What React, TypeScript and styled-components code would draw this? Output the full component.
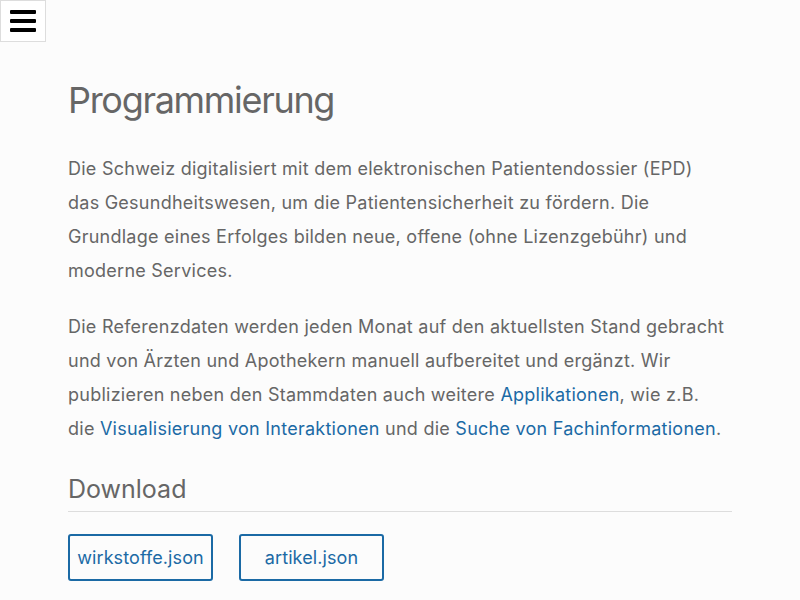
import styled, { createGlobalStyle } from 'styled-components'

const GlobalStyle = createGlobalStyle`
    body {
        margin: 0;
        background: #fcfcfc;
        font-family: Inter, "Liberation Sans", sans-serif;
        color: #666;
    }
`;

const MenuButton = styled.button`
    position: absolute;
    top: 0;
    left: 0;
    width: 46px;
    height: 42px;
    padding: 0;
    background: #fff;
    border: 1px solid #ddd;
    display: flex;
    flex-direction: column;
    align-items: center;
    justify-content: center;
    gap: 5px;
    cursor: pointer;
`;

const Bar = styled.span`
    display: block;
    width: 26px;
    height: 4px;
    border-radius: 1px;
    background: #000;
`;

const Container = styled.main`
    max-width: 664px;
    margin: 0 auto;
    padding-top: 79px;
`;

const Title = styled.h1`
    margin: 0 0 30px;
    font-size: 36px;
    font-weight: 400;
    letter-spacing: -1.3px;
    line-height: 1.2;
`;

const Text = styled.p`
    max-width: 660px;
    margin: 0 0 22px;
    font-size: 18px;
    letter-spacing: 0.25px;
    line-height: 34px;
`;

const TextLink = styled.a`
    color: #1b6aa5;
    text-decoration: none;
`;

const SectionTitle = styled.h2`
    margin: 27px 0 22px;
    padding-bottom: 5px;
    border-bottom: 1px solid #ddd;
    font-size: 25px;
    font-weight: 400;
    line-height: 1.3;
`;

const Downloads = styled.div`
    display: flex;
    gap: 26px;
`;

const DownloadButton = styled.a`
    width: 145px;
    height: 47px;
    box-sizing: border-box;
    display: flex;
    align-items: center;
    justify-content: center;
    border: 2px solid #1b6aa5;
    border-radius: 3px;
    color: #1b6aa5;
    font-size: 18px;
    letter-spacing: 0.1px;
    text-decoration: none;
`;

const App = () => (
    <>
        <GlobalStyle />
        <MenuButton aria-label="Menü">
            <Bar />
            <Bar />
            <Bar />
        </MenuButton>
        <Container>
            <Title>Programmierung</Title>
            <Text>
                Die Schweiz digitalisiert mit dem elektronischen Patientendossier (EPD)
                das Gesundheitswesen, um die Patientensicherheit zu fördern. Die
                Grundlage eines Erfolges bilden neue, offene (ohne Lizenzgebühr) und
                moderne Services.
            </Text>
            <Text>
                Die Referenzdaten werden jeden Monat auf den aktuellsten Stand gebracht
                und von Ärzten und Apothekern manuell aufbereitet und ergänzt. Wir
                publizieren neben den Stammdaten auch weitere <TextLink href="#">Applikationen</TextLink>, wie z.B.
                die <TextLink href="#">Visualisierung von Interaktionen</TextLink> und die <TextLink href="#">Suche von Fachinformationen</TextLink>.
            </Text>
            <SectionTitle>Download</SectionTitle>
            <Downloads>
                <DownloadButton href="#">wirkstoffe.json</DownloadButton>
                <DownloadButton href="#">artikel.json</DownloadButton>
            </Downloads>
        </Container>
    </>
);

export default App;
